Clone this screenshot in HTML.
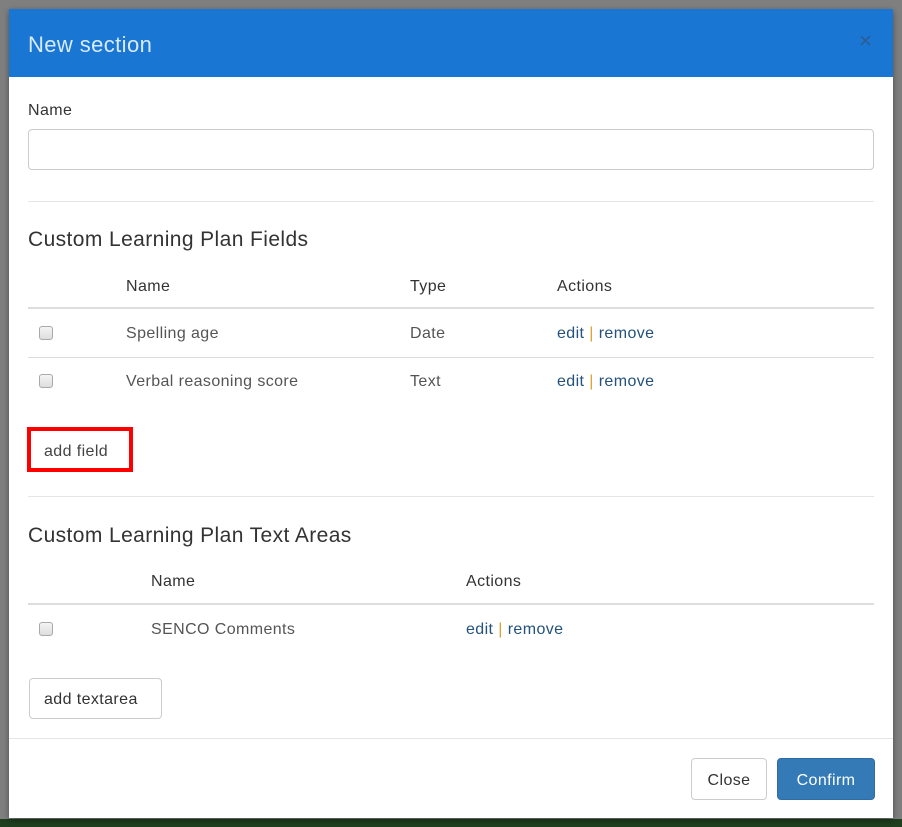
<!DOCTYPE html>
<html><head><meta charset="utf-8"><style>
html,body{margin:0;padding:0;}
body{width:902px;height:827px;background:#7f7f7f;position:relative;overflow:hidden;font-family:"Liberation Sans","DejaVu Sans",sans-serif;color:#333;letter-spacing:0.4px;}
.abs{position:absolute;}
.green{left:0;top:819px;width:902px;height:8px;background:#1f3f1f;}
.modal{left:9px;top:9px;width:884px;height:809px;background:#fff;box-shadow:0 2px 6px rgba(0,0,0,.4);}
.hdr{left:0;top:0;width:884px;height:68px;background:#1976d2;}
.title{left:19px;top:23px;font-size:22px;color:#d8eafc;}
.x{left:850px;top:19px;font-size:22px;color:#2d5c91;}
.t{font-size:16px;}
.hd{color:#333;font-size:16px;}
.h4{font-size:21px;color:#333;}
.line{height:1px;background:#e5e5e5;}
.hline{height:2px;background:#ddd;}
.cb{width:12px;height:12px;border:1px solid #aaa;border-radius:3px;background:linear-gradient(#f4f4f4,#ddd);}
a{color:#23527c;text-decoration:none}
.pipe{color:#e0a030}
.btn{border:1px solid #ccc;border-radius:4px;background:#fff;font-size:16px;color:#333;box-sizing:border-box;}
</style></head><body>
<div class="abs green"></div>
<div class="abs modal">
 <div class="abs hdr"></div>
 <div class="abs title">New section</div>
 <div class="abs x">×</div>
 <div class="abs hd" style="left:19px;top:93px">Name</div>
 <div class="abs" style="left:19px;top:120px;width:846px;height:41px;border:1px solid #ccc;border-radius:4px;box-sizing:border-box"></div>
 <div class="abs line" style="left:19px;top:192px;width:846px"></div>
 <div class="abs h4" style="left:19px;top:219px">Custom Learning Plan Fields</div>
 <div class="abs hd" style="left:117px;top:269px">Name</div>
 <div class="abs hd" style="left:401px;top:269px">Type</div>
 <div class="abs hd" style="left:548px;top:269px">Actions</div>
 <div class="abs hline" style="left:19px;top:298px;width:846px"></div>
 <div class="abs cb" style="left:30px;top:317px"></div>
 <div class="abs t" style="left:117px;top:316px;color:#555">Spelling age</div>
 <div class="abs t" style="left:401px;top:316px;color:#555">Date</div>
 <div class="abs t" style="left:548px;top:316px"><a>edit</a> <span class="pipe">|</span> <a>remove</a></div>
 <div class="abs line" style="left:19px;top:348px;width:846px;background:#ddd"></div>
 <div class="abs cb" style="left:30px;top:365px"></div>
 <div class="abs t" style="left:117px;top:364px;color:#555">Verbal reasoning score</div>
 <div class="abs t" style="left:401px;top:364px;color:#555">Text</div>
 <div class="abs t" style="left:548px;top:364px"><a>edit</a> <span class="pipe">|</span> <a>remove</a></div>
 <div class="abs" style="left:18px;top:418px;width:106px;height:45px;border:4px solid #f00;box-sizing:border-box"></div>
 <div class="abs t" style="left:35px;top:434px;color:#444">add field</div>
 <div class="abs line" style="left:19px;top:487px;width:846px"></div>
 <div class="abs h4" style="left:19px;top:515px">Custom Learning Plan Text Areas</div>
 <div class="abs hd" style="left:142px;top:564px">Name</div>
 <div class="abs hd" style="left:457px;top:564px">Actions</div>
 <div class="abs hline" style="left:19px;top:594px;width:846px"></div>
 <div class="abs cb" style="left:30px;top:613px"></div>
 <div class="abs t" style="left:142px;top:612px;color:#555">SENCO Comments</div>
 <div class="abs t" style="left:457px;top:612px"><a>edit</a> <span class="pipe">|</span> <a>remove</a></div>
 <div class="abs btn" style="left:20px;top:669px;width:133px;height:41px;line-height:41px;padding-left:14px">add textarea</div>
 <div class="abs line" style="left:0;top:729px;width:884px"></div>
 <div class="abs btn" style="left:682px;top:749px;width:76px;height:42px;line-height:43px;text-align:center">Close</div>
 <div class="abs btn" style="left:768px;top:749px;width:98px;height:42px;line-height:43px;text-align:center;background:#337ab7;border-color:#2e6da4;color:#fff">Confirm</div>
</div>
</body></html>
